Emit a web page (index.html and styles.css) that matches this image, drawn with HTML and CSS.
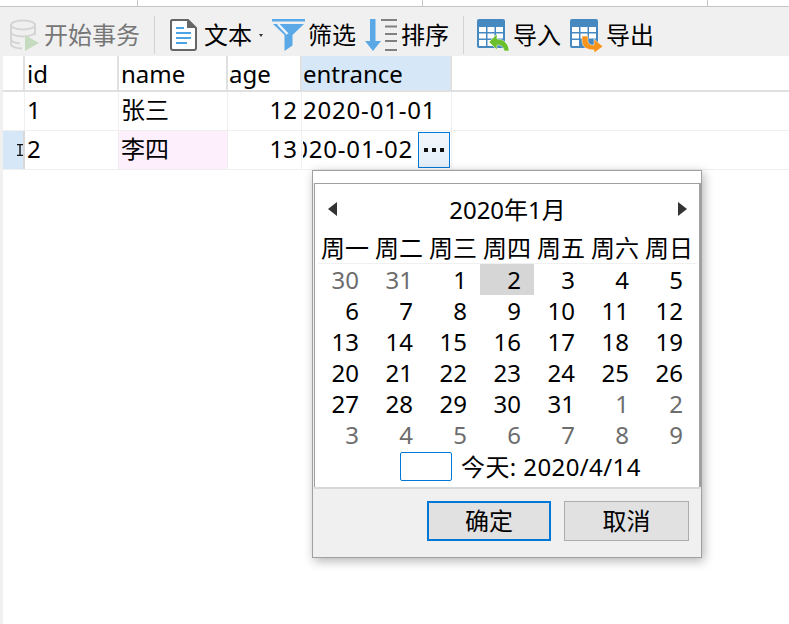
FILE: index.html
```html
<!DOCTYPE html>
<html lang="en">
<head>
    <meta charset="UTF-8">
    <title>Table editor</title>
    <link rel="stylesheet" href="styles.css">
</head>
<body>
    <div class="top-strip">
        <span class="strip-cell first"></span>
        <span class="strip-cell"></span>
        <span class="strip-cell"></span>
    </div>

    <div class="toolbar">
        <div class="tool disabled db-tool">
            <svg width="30" height="32" viewBox="0 0 30 32">
                <g fill="none" stroke="#d4d4d4" stroke-width="2">
                    <ellipse cx="14" cy="6" rx="12" ry="4.500"/>
                    <path d="M2 6v19c0 2.500 5 4.500 11 4.500M26 6v10M2 13c0 2.500 5 4.500 12 4.500s12-2 12-4.500M2 20c0 2.500 4 4 9 4.400"/>
                </g>
                <path d="M16 16l14 8-14 8z" fill="#c5dcc0"/>
            </svg>
            <span>开始事务</span>
        </div>
        <span class="sep sep-a"></span>
        <div class="tool doc-tool">
            <svg width="27" height="32" viewBox="0 0 27 32">
                <path d="M2 1h16l8 8v20a2 2 0 0 1-2 2H3a2 2 0 0 1-2-2V2z" fill="#fff" stroke="#666" stroke-width="2"/>
                <path d="M17 0l9 9h-9z" fill="#666"/>
                <path d="M6 9h8M6 14h15M6 19h15M6 24h11" stroke="#4ba3e3" stroke-width="2"/>
            </svg>
            <span>文本</span>
            <i class="caret"></i>
        </div>
        <div class="tool filter-tool">
            <svg width="33" height="33" viewBox="0 0 33 33">
                <path d="M0 0h33v2.500H0z" fill="#5aa9e6"/>
                <path d="M1 5h31L20.500 16v10.500L12.500 32V16z" fill="#5aa9e6"/>
                <path d="M6 5l9.500 10" stroke="#eaf3fb" stroke-width="2.500" fill="none"/>
            </svg>
            <span>筛选</span>
        </div>
        <div class="tool sort-tool">
            <svg width="33" height="33" viewBox="0 0 33 33">
                <path d="M5 0h5.500v22H16L8 32 0 22h5z" fill="#5aa9e6"/>
                <path d="M16 1h16M20 7.500h12M20 15h12M20 22h12M20 31h12" stroke="#808080" stroke-width="2" fill="none"/>
            </svg>
            <span>排序</span>
        </div>
        <span class="sep sep-b"></span>
        <div class="tool import-tool">
            <svg width="33" height="33" viewBox="0 0 33 33">
                <rect x="0" y="0" width="28" height="29" rx="2" fill="#4589c0"/>
                <path d="M2 8h7v5H2zM10.500 8h7v5h-7zM19 8h7v5h-7zM2 14.500h7v5H2zM10.500 14.500h7v5h-7zM19 14.500h7v5h-7zM2 21h7v6H2zM10.500 21h7v6h-7z" fill="#fff"/>
                <path d="M12 23l8-8v5c7 0 12 5 12 12h-5c0-4-3-6-7-6v5z" fill="#6cc02e" stroke="#fff" stroke-width="0.500"/>
            </svg>
            <span>导入</span>
        </div>
        <div class="tool export-tool">
            <svg width="33" height="33" viewBox="0 0 33 33">
                <rect x="0" y="0" width="28" height="29" rx="2" fill="#4589c0"/>
                <path d="M2 8h7v5H2zM10.500 8h7v5h-7zM19 8h7v5h-7zM2 14.500h7v5H2zM10.500 14.500h7v5h-7zM19 14.500h7v5h-7zM2 21h7v6H2z" fill="#fff"/>
                <path d="M12 17h6v4c0 4 2 5 6 5v-6l9 7.500-9 6.500v-3c-7 0-12-3-12-9z" fill="#f7941e" stroke="#fff" stroke-width="0.500"/>
            </svg>
            <span>导出</span>
        </div>
    </div>

    <div class="grid">
        <div class="row head">
            <div class="cell mark"></div>
            <div class="cell c-id">id</div>
            <div class="cell c-name">name</div>
            <div class="cell c-age">age</div>
            <div class="cell c-date selected">entrance</div>
        </div>
        <div class="row body-row">
            <div class="cell mark"></div>
            <div class="cell c-id">1</div>
            <div class="cell c-name">张三</div>
            <div class="cell c-age num">12</div>
            <div class="cell c-date date-text">2020-01-01</div>
        </div>
        <div class="row body-row">
            <div class="cell mark current">
                <svg width="6" height="12" viewBox="0 0 6 12">
                    <path d="M0 .5h6M0 11.500h6M3 0v12" stroke="#111" stroke-width="1.400" fill="none"/>
                </svg>
            </div>
            <div class="cell c-id">2</div>
            <div class="cell c-name pink">李四</div>
            <div class="cell c-age num">13</div>
            <div class="cell c-date editing">
                <span class="clip date-text"><span>2020-01-02</span></span>
                <span class="more"><i></i><i></i><i></i></span>
            </div>
        </div>
    </div>

    <div class="popup">
        <div class="popup-title"></div>
        <div class="calendar">
            <div class="month-nav">
                <span class="arrow left"></span>
                <span>2020年1月</span>
                <span class="arrow right"></span>
            </div>
            <div class="weekdays">
                <span>周一</span><span>周二</span><span>周三</span><span>周四</span><span>周五</span><span>周六</span><span>周日</span>
            </div>
            <div class="days">
                <span class="other">30</span><span class="other">31</span><span>1</span><span class="today-cell">2</span><span>3</span><span>4</span><span>5</span>
                <span>6</span><span>7</span><span>8</span><span>9</span><span>10</span><span>11</span><span>12</span>
                <span>13</span><span>14</span><span>15</span><span>16</span><span>17</span><span>18</span><span>19</span>
                <span>20</span><span>21</span><span>22</span><span>23</span><span>24</span><span>25</span><span>26</span>
                <span>27</span><span>28</span><span>29</span><span>30</span><span>31</span><span class="other">1</span><span class="other">2</span>
                <span class="other">3</span><span class="other">4</span><span class="other">5</span><span class="other">6</span><span class="other">7</span><span class="other">8</span><span class="other">9</span>
            </div>
            <div class="today-row">
                <span class="today-box"></span>
                <span class="today-label">今天: 2020/4/14</span>
            </div>
        </div>
        <div class="popup-actions">
            <button class="btn primary">确定</button>
            <button class="btn">取消</button>
        </div>
    </div>
</body>
</html>
```

FILE: styles.css
```css
* {
    box-sizing: border-box;
}
html, body {
    margin: 0;
    height: 100%;
}
body {
    position: relative;
    overflow: hidden;
    background: #fff;
    color: #000;
    font-family: "Noto Sans", "Noto Sans CJK SC", sans-serif;
    font-size: 24px;
}
body::before {
    content: "";
    position: absolute;
    left: 0;
    top: 56px;
    bottom: 0;
    width: 3px;
    background: #f0f0f0;
}
.top-strip {
    display: flex;
    height: 7px;
    border-bottom: 1px solid #c4c4c4;
}
.strip-cell {
    width: 285px;
    border-right: 1px solid #c4c4c4;
}
.strip-cell.first {
    width: 138px;
}
.toolbar {
    display: flex;
    align-items: center;
    height: 49px;
    padding: 7px 0 0 9px;
    background: #f0f0f0;
}
.tool {
    display: flex;
    align-items: center;
    line-height: 32px;
    white-space: nowrap;
}
.tool svg {
    flex: none;
    margin-right: 3px;
}
.disabled {
    color: #777;
}
.db-tool svg {
    margin-right: 5px;
}
.doc-tool svg {
    margin-right: 7px;
}
.sep {
    width: 1px;
    height: 38px;
    background: #d2d2d2;
}
.sep-a {
    margin: 0 15px 0 14px;
}
.sep-b {
    margin: 0 13px 0 14px;
}
.caret {
    width: 0;
    height: 0;
    margin: 0 9px 0 7px;
    border: 2.500px solid transparent;
    border-top: 3px solid #333;
    border-bottom: 0;
}
.sort-tool, .export-tool {
    margin-left: 9px;
}
.grid {
    padding-left: 3px;
}
.row {
    display: flex;
}
.head {
    height: 36px;
    border-bottom: 2px solid #e0e0e0;
}
.head .cell {
    border-right: 2px solid #e0e0e0;
}
.body-row {
    height: 39px;
    border-bottom: 1px solid #efefef;
}
.cell {
    flex: none;
    padding-left: 2px;
    border-right: 1px solid #efefef;
    line-height: 36px;
    white-space: nowrap;
}
.mark {
    width: 22px;
    padding: 0;
}
.current {
    display: flex;
    align-items: center;
    justify-content: flex-end;
    padding-right: 0;
    background: #d6e8f8;
    border-right: 2px solid #d8d8d8;
}
.c-id {
    width: 94px;
}
.c-name {
    width: 109px;
}
.c-age {
    width: 74px;
    padding-left: 1px;
}
.c-date {
    width: 150px;
    padding-left: 1px;
}
.num {
    padding: 0 4px 0 0;
    text-align: right;
}
.pink {
    background: #fdf0fc;
}
.selected {
    background: #d6e8f8;
}
.date-text {
    letter-spacing: 0.800px;
}
.editing {
    display: flex;
    padding: 0 0 0 1px;
    align-items: flex-start;
}
.clip {
    display: block;
    width: 110px;
    overflow: hidden;
    direction: rtl;
    flex: none;
}
.clip span {
    direction: ltr;
    unicode-bidi: bidi-override;
}
.more {
    display: flex;
    align-items: center;
    justify-content: center;
    gap: 4px;
    width: 32px;
    height: 36px;
    margin: 1px 0 0 5px;
    border: 1px solid #0078d7;
    background: linear-gradient(#f2f7fb, #e3eff9);
}
.more i {
    width: 4px;
    height: 4px;
    background: #111;
}
.popup {
    position: absolute;
    left: 312px;
    top: 170px;
    width: 390px;
    height: 388px;
    background: #f0f0f0;
    border: 1px solid #a0a0a0;
    box-shadow: 2px 3px 10px rgba(0, 0, 0, 0.3);
    display: flex;
    flex-direction: column;
}
.popup-title {
    height: 12px;
    background: #fff;
}
.calendar {
    height: 304px;
    margin: 0 0 0 1px;
    padding: 0 2px 0 3px;
    background: #fff;
    border: solid #a0a0a0;
    border-width: 1px 2px 0 1px;
}
.month-nav {
    display: flex;
    align-items: center;
    justify-content: space-between;
    height: 49px;
    padding: 0 10px;
}
.arrow {
    width: 0;
    height: 0;
    border-style: solid;
    border-width: 7px 0;
    border-color: transparent;
}
.arrow.left {
    border-right: 9px solid #333;
}
.arrow.right {
    border-left: 9px solid #333;
}
.weekdays, .days {
    display: grid;
    grid-template-columns: repeat(7, 54px);
}
.weekdays {
    height: 31px;
    border-bottom: 1px solid #f0f0f0;
    line-height: 30px;
    text-align: center;
}
.days {
    grid-auto-rows: 31px;
    line-height: 31px;
    text-align: right;
}
.days span {
    padding-right: 13px;
}
.other {
    color: #6d6d6d;
}
.today-cell {
    background: #d6d6d6;
}
.today-row {
    display: flex;
    align-items: center;
    gap: 9px;
    height: 32px;
    padding-left: 82px;
    letter-spacing: 0.400px;
}
.today-box {
    width: 52px;
    height: 29px;
    border: 1px solid #0078d7;
    border-radius: 2px;
}
.today-label {
    margin-bottom: 2px;
}
.popup-actions {
    display: flex;
    justify-content: flex-end;
    gap: 13px;
    flex: 1;
    padding: 12px 11px 0 0;
    border-top: 2px solid #d8d8d8;
    margin: 0 1px 1px;
}
.btn {
    width: 125px;
    height: 40px;
    padding: 0;
    background: #e1e1e1;
    border: 1px solid #adadad;
    color: #000;
    font: inherit;
    line-height: 36px;
}
.primary {
    width: 124px;
    border: 2px solid #0078d7;
}
```
